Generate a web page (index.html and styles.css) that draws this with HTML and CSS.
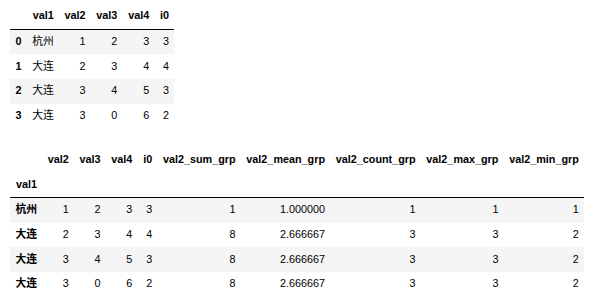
FILE: index.html
```html
<!DOCTYPE html>
<html>
<head>
<meta charset="utf-8">
<link rel="stylesheet" href="styles.css">
</head>
<body>
<div class="output">
<table class="dataframe first">
  <thead>
    <tr><th></th><th>val1</th><th>val2</th><th>val3</th><th>val4</th><th>i0</th></tr>
  </thead>
  <tbody>
    <tr><th>0</th><td>杭州</td><td>1</td><td>2</td><td>3</td><td>3</td></tr>
    <tr><th>1</th><td>大连</td><td>2</td><td>3</td><td>4</td><td>4</td></tr>
    <tr><th>2</th><td>大连</td><td>3</td><td>4</td><td>5</td><td>3</td></tr>
    <tr><th>3</th><td>大连</td><td>3</td><td>0</td><td>6</td><td>2</td></tr>
  </tbody>
</table>
<table class="dataframe second">
  <thead>
    <tr><th></th><th>val2</th><th>val3</th><th>val4</th><th>i0</th><th>val2_sum_grp</th><th>val2_mean_grp</th><th>val2_count_grp</th><th>val2_max_grp</th><th>val2_min_grp</th></tr>
    <tr><th>val1</th><th></th><th></th><th></th><th></th><th></th><th></th><th></th><th></th><th></th></tr>
  </thead>
  <tbody>
    <tr><th>杭州</th><td>1</td><td>2</td><td>3</td><td>3</td><td>1</td><td>1.000000</td><td>1</td><td>1</td><td>1</td></tr>
    <tr><th>大连</th><td>2</td><td>3</td><td>4</td><td>4</td><td>8</td><td>2.666667</td><td>3</td><td>3</td><td>2</td></tr>
    <tr><th>大连</th><td>3</td><td>4</td><td>5</td><td>3</td><td>8</td><td>2.666667</td><td>3</td><td>3</td><td>2</td></tr>
    <tr><th>大连</th><td>3</td><td>0</td><td>6</td><td>2</td><td>8</td><td>2.666667</td><td>3</td><td>3</td><td>2</td></tr>
  </tbody>
</table>
</div>
</body>
</html>
```

FILE: styles.css
```css
html, body {
  margin: 0;
  padding: 0;
  background: #ffffff;
}
.output {
  display: flex;
  flex-direction: column;
  align-items: flex-start;
  padding: 4px 0 0 10px;
  gap: 19px;
}
.dataframe {
  border-collapse: collapse;
  border-spacing: 0;
  border: none;
  color: #000000;
  font-family: "Liberation Sans", Arial, "Noto Sans CJK SC", sans-serif;
  font-size: 10.8px;
}
.dataframe thead {
  border-bottom: 1px solid #000000;
  vertical-align: bottom;
}
.dataframe th, .dataframe td {
  text-align: right;
  vertical-align: middle;
  padding: 0.5em;
  line-height: 13.9px;
  white-space: nowrap;
  border: none;
}
.dataframe th {
  font-weight: bold;
}
.dataframe tbody tr:nth-child(odd) {
  background: #f5f5f5;
}
.dataframe tbody tr th {
  vertical-align: top;
}
```
